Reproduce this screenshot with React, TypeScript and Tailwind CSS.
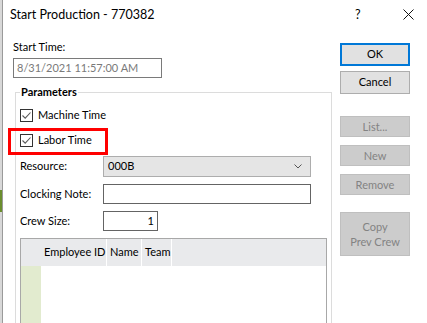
import React from "react";

const font = { fontFamily: 'Lato, "Noto Sans", sans-serif' };

function Check() {
  return (
    <span className="w-[13px] h-[13px] border border-[#333333] bg-white flex items-center justify-center shrink-0">
      <svg width="11" height="11" viewBox="0 0 11 11">
        <path d="M1.5 5.5 L4.2 8.2 L9.5 2.5" fill="none" stroke="#5a5a5a" strokeWidth="1.1" />
      </svg>
    </span>
  );
}

function DisabledBtn({ children, h = "h-[21px]" }: { children: React.ReactNode; h?: string }) {
  return (
    <div className={`w-[70px] ${h} shrink-0 bg-[#cccccc] border border-[#bfbfbf] text-[#838383] flex items-center justify-center text-center leading-[15px]`}>
      {children}
    </div>
  );
}

export default function App() {
  return (
    <div className="relative w-[427px] h-[323px] overflow-hidden bg-white flex text-[11px] text-black" style={font}>
      {/* background window sliver */}
      <div className="w-[3px] h-full shrink-0 bg-[#d8d8d8] border-r border-[#9a9a9a] flex flex-col">
        <div className="h-[190px] shrink-0" />
        <div className="h-[22px] shrink-0 bg-[#6b8e2e]" />
      </div>

      <div className="flex-1 flex flex-col min-h-0 overflow-hidden">
        {/* title bar */}
        <div className="h-[30px] shrink-0 flex items-center pl-[7px] relative text-[12.5px]">
          <span className="leading-[14px]">Start Production - 770382</span>
          <span className="absolute left-[352px] top-[8px] leading-[14px]">?</span>
          <svg className="absolute left-[400px] top-[9px]" width="11" height="11" viewBox="0 0 11 11">
            <path d="M0.5 0.5 L10.5 10.5 M10.5 0.5 L0.5 10.5" stroke="#111" strokeWidth="1" />
          </svg>
        </div>

        {/* body */}
        <div className="flex flex-1 min-h-0 items-start">
          {/* left column */}
          <div className="ml-[10px] w-[319px] shrink-0 flex flex-col">
            <div className="mt-[10px] leading-[14px] shrink-0">Start Time:</div>
            <div className="mt-[4px] shrink-0 w-[149px] h-[20px] border border-[#7a7a7a] flex items-center pl-[3px] text-[#7a7a7a]">
              8/31/2021 11:57:00 AM
            </div>

            <fieldset className="mt-[7px] ml-[2px] w-[317px] h-[260px] shrink-0 border border-[#dcdcdc]">
              <legend className="ml-[4px] px-[1px] font-bold leading-[14px]">Parameters</legend>
              <div className="pl-[4px] flex flex-col">
                <div className="mt-[8px] h-[16px] shrink-0 flex items-center gap-[5px]">
                  <Check />
                  <span>Machine Time</span>
                </div>
                <div className="mt-[9px] h-[16px] shrink-0 flex items-center gap-[5px]">
                  <Check />
                  <span>Labor Time</span>
                </div>
                <div className="mt-[8px] shrink-0 flex items-center">
                  <span className="w-[83px]">Resource:</span>
                  <div className="w-[208px] h-[21px] bg-[#e5e5e5] border border-[#adadad] flex items-center pl-[4px] justify-between pr-[8px]">
                    <span>000B</span>
                    <svg width="8" height="5" viewBox="0 0 8 5">
                      <path d="M0.5 0.5 L4 4 L7.5 0.5" fill="none" stroke="#555" strokeWidth="1" />
                    </svg>
                  </div>
                </div>
                <div className="mt-[7px] shrink-0 flex items-center">
                  <span className="w-[83px]">Clocking Note:</span>
                  <div className="w-[208px] h-[20px] border border-[#646464] bg-white" />
                </div>
                <div className="mt-[7px] shrink-0 flex items-center">
                  <span className="w-[83px]">Crew Size:</span>
                  <div className="w-[55px] h-[20px] border border-[#646464] bg-white flex items-center justify-end pr-[3px]">1</div>
                </div>

                {/* grid */}
                <div className="mt-[7px] shrink-0 w-[307px] h-[100px] border border-[#a8a8a8] flex flex-col">
                  <div className="h-[27px] shrink-0 bg-[#e9eaec] flex whitespace-nowrap">
                    <div className="w-[20px]" />
                    <div className="w-[66px] border-r border-white pl-[3px] flex items-center">Employee ID</div>
                    <div className="w-[35px] border-r border-white pl-[3px] flex items-center">Name</div>
                    <div className="w-[30px] border-r border-white pl-[3px] flex items-center">Team</div>
                  </div>
                  <div className="flex-1 flex">
                    <div className="w-[20px] bg-[#e2ebcf]" />
                    <div className="flex-1 bg-white" />
                  </div>
                </div>
              </div>
            </fieldset>
          </div>

          {/* right column */}
          <div className="ml-[8px] shrink-0 flex flex-col">
            <div className="mt-[13px] shrink-0 w-[70px] h-[23px] bg-[#e1e1e1] border-2 border-[#0078d7] flex items-center justify-center">OK</div>
            <div className="mt-[5px] shrink-0 w-[70px] h-[23px] bg-[#e1e1e1] border border-[#adadad] flex items-center justify-center">Cancel</div>
            <div className="mt-[22px]"><DisabledBtn>List...</DisabledBtn></div>
            <div className="mt-[8px]"><DisabledBtn>New</DisabledBtn></div>
            <div className="mt-[8px]"><DisabledBtn>Remove</DisabledBtn></div>
            <div className="mt-[17px]">
              <DisabledBtn h="h-[44px]">
                <span>Copy<br />Prev Crew</span>
              </DisabledBtn>
            </div>
          </div>
        </div>
      </div>

      {/* annotation highlight */}
      <div className="absolute left-[8px] top-[128px] w-[100px] h-[27px] border-[3px] border-[#ff0000]" />
    </div>
  );
}
